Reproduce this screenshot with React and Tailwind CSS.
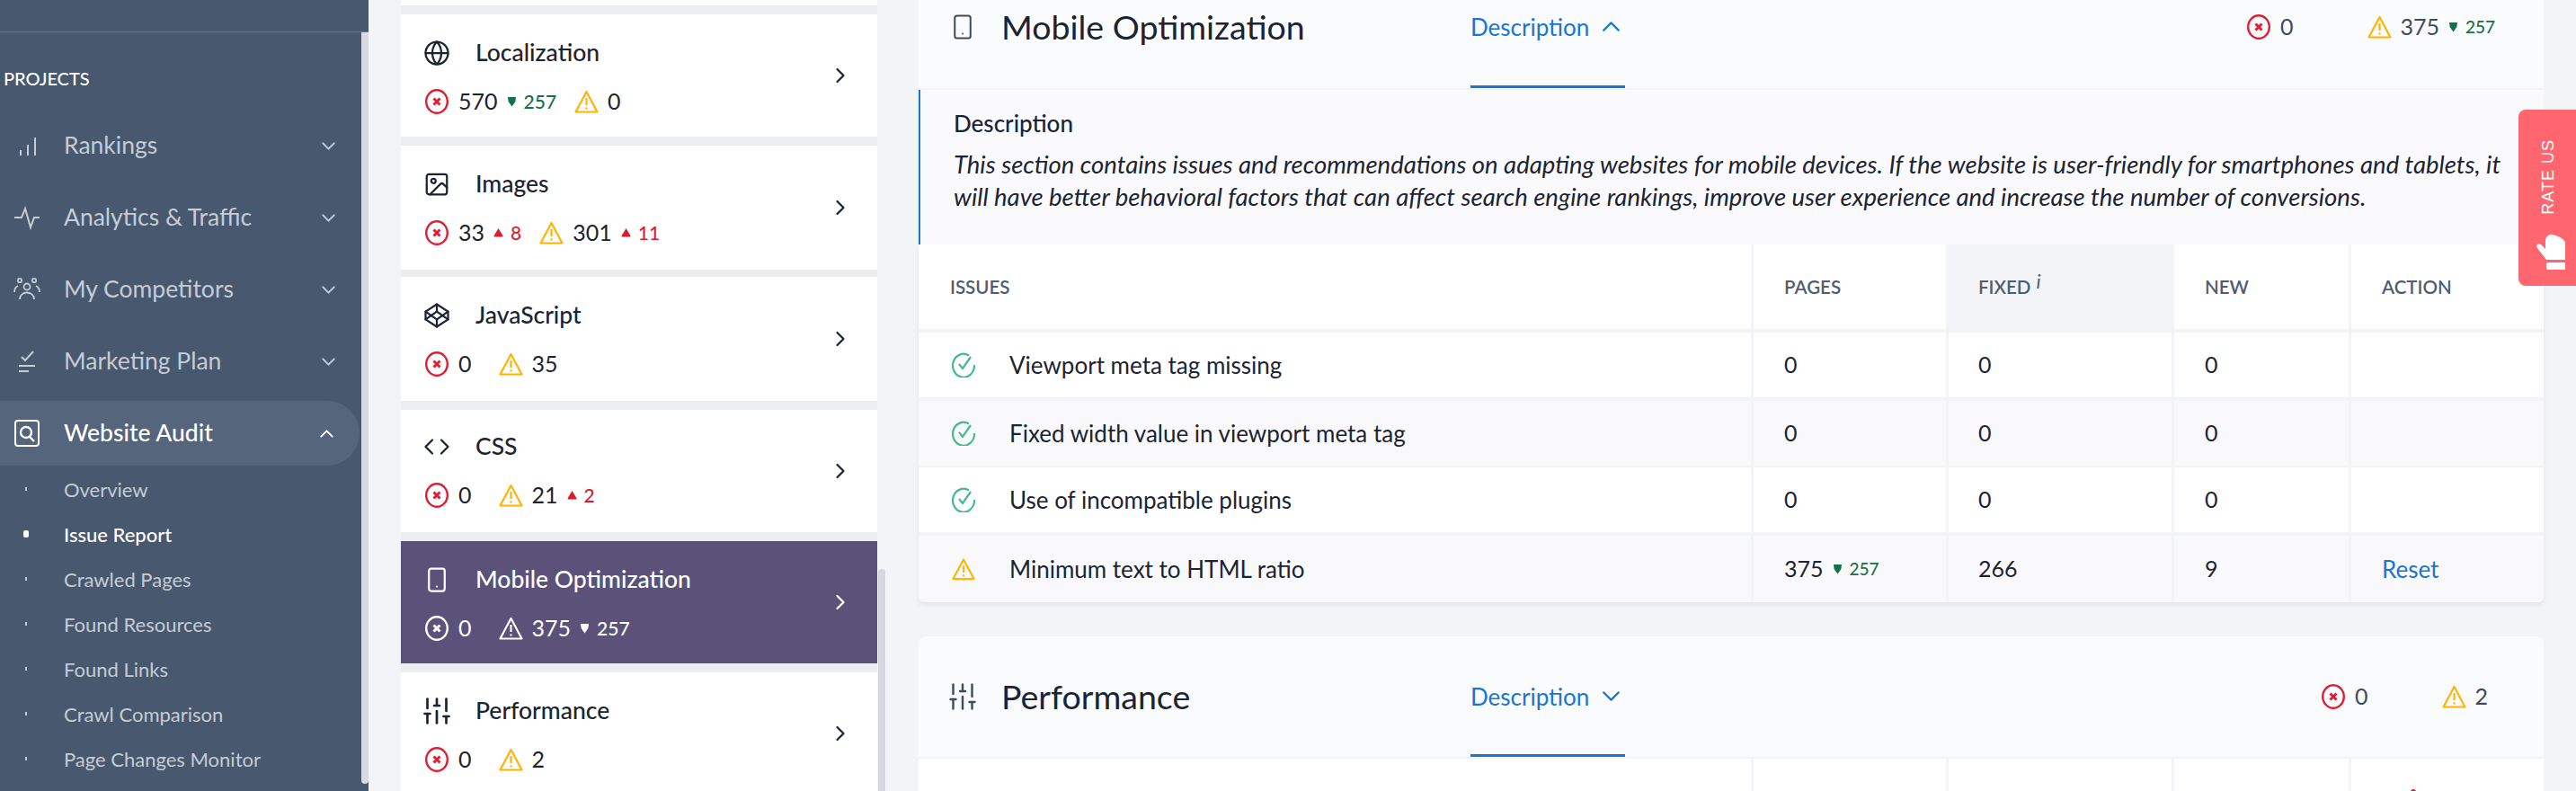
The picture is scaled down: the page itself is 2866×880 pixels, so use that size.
import { ChevronDown, ChevronUp, ChevronRight, Globe, Image, Codepen, Code, Smartphone, SlidersVertical } from "lucide-react";

function BarsIcon() {
  return (
    <svg width="28" height="28" viewBox="0 0 28 28" fill="none" stroke="#c5ccd6" strokeWidth="2">
      <path d="M7 25v-6M15 25V13M23 25V5" />
    </svg>
  );
}

function PulseIcon() {
  return (
    <svg width="30" height="28" viewBox="0 0 30 28" fill="none" stroke="#c5ccd6" strokeWidth="2">
      <path d="M1 14h8l4-10 6 21 4-11h6" />
    </svg>
  );
}

function PeopleIcon() {
  return (
    <svg width="30" height="28" viewBox="0 0 30 28" fill="none" stroke="#c5ccd6" strokeWidth="1.8">
      <circle cx="15" cy="11" r="3.5" />
      <circle cx="7" cy="4" r="2.2" />
      <circle cx="23" cy="4" r="2.2" />
      <path d="M7 25c0-10 16-10 16 0M1 17c0-4 2-6 4-7M29 17c0-4-2-6-4-7" />
    </svg>
  );
}

function PlanIcon() {
  return (
    <svg width="28" height="28" viewBox="0 0 28 28" fill="none" stroke="#c5ccd6" strokeWidth="2">
      <path d="M8 9l4 4 9-10M5 19h18M5 25h11" />
    </svg>
  );
}

function AuditIcon() {
  return (
    <svg width="28" height="30" viewBox="0 0 28 30" fill="none" stroke="#fff" strokeWidth="2">
      <rect x="1" y="1" width="26" height="28" rx="3" />
      <circle cx="13" cy="14" r="6" strokeWidth="2.4" />
      <path d="M17 19l5 5" strokeWidth="2.4" />
    </svg>
  );
}

function ErrorIcon({ mono }) {
  return (
    <svg width="26" height="28" viewBox="0 0 26 28" fill="none" stroke={mono ? "#fff" : "#e01e33"} strokeWidth="2.4">
      <ellipse cx="13" cy="14" rx="11.800" ry="12.800" />
      <path d="M9.500 10.500l7 7M16.500 10.500l-7 7" strokeWidth="3" />
    </svg>
  );
}

function WarnIcon({ mono }) {
  const c = mono ? "#fff" : "#ffb400";
  return (
    <svg width="27" height="26" viewBox="0 0 27 26" fill="none" stroke={c} strokeWidth="2.2" strokeLinejoin="round">
      <path d="M13.5 2L1.5 24.5h24z" />
      <path d="M13.5 9v8M13.5 19.5v2" />
    </svg>
  );
}

function CheckIcon() {
  return (
    <svg width="26" height="28" viewBox="0 0 26 28" fill="none" stroke="#47b98f" strokeWidth="2.2">
      <path d="M19 3.5A12 13 0 1 0 25 14" />
      <path d="M8 13l4 5 9-13" />
    </svg>
  );
}

function Delta({ dir, value, light, small }) {
  const c = light ? "text-white" : dir === "down" ? "text-[#14704a]" : "text-[#dc1c2e]";
  return (
    <span className={`flex items-center gap-[8px] ml-[10px] font-medium ${small ? "text-[19px]" : "text-[21px]"} ${c}`}>
      <svg width="11" height="12" viewBox="0 0 11 12" fill="currentColor">
        {dir === "down" ? <path d="M1 1h9l-.6 5L5.5 11.5 1.6 6z" /> : <path d="M5.500 1l4.800 8c.3.8 0 1.500-1 1.500H1.700c-1 0-1.300-.7-1-1.500z" />}
      </svg>
      {value}
    </span>
  );
}

function NavRow({ icon, label, active, open }) {
  const Chev = open ? ChevronUp : ChevronDown;
  return (
    <div className={`flex h-[72px] items-center rounded-r-full ${active ? "bg-[#54657c] text-white font-medium" : "text-[#c5ccd6]"}`}>
      <span className="flex w-[71px] justify-center pr-[11px]">{icon}</span>
      <span className="flex-1 text-[26.5px]">{label}</span>
      <Chev size={25} strokeWidth={1.9} className={`mr-[24px] ${active ? "text-white" : "text-[#c5ccd6]"}`} />
    </div>
  );
}

function SubItem({ label, active }) {
  return (
    <div className={`flex h-[50px] items-center text-[22px] ${active ? "text-white font-medium" : "text-[#c5ccd6]"}`}>
      <span className="flex w-[71px] justify-center pr-[13px]">
        <span className={active ? "h-[8px] w-[6px] rounded-[2px] bg-white" : "h-[4px] w-[1.500px] bg-[#c5ccd6]"} />
      </span>
      {label}
    </div>
  );
}

function Sidebar() {
  return (
    <div className="flex h-[880px] w-[410px] shrink-0 flex-col bg-[#47586f]">
      <div className="h-[36px] shrink-0 border-b border-[#6b7a8e]" />
      <div className="flex flex-1">
        <div className="flex-1">
          <div className="flex h-[90px] items-end pb-[24px] pl-[4px] text-[20px] font-medium text-white">PROJECTS</div>
          <div className="flex flex-col gap-[8px]">
            <NavRow icon={<BarsIcon />} label="Rankings" />
            <NavRow icon={<PulseIcon />} label="Analytics & Traffic" />
            <NavRow icon={<PeopleIcon />} label="My Competitors" />
            <NavRow icon={<PlanIcon />} label="Marketing Plan" />
            <div className="mr-[2px]">
              <NavRow icon={<AuditIcon />} label="Website Audit" active open />
            </div>
          </div>
          <div className="pt-px">
            <SubItem label="Overview" />
            <SubItem label="Issue Report" active />
            <SubItem label="Crawled Pages" />
            <SubItem label="Found Resources" />
            <SubItem label="Found Links" />
            <SubItem label="Crawl Comparison" />
            <SubItem label="Page Changes Monitor" />
          </div>
        </div>
        <div className="mb-[8px] w-[8px] rounded-b-md bg-[#d8dbe6]" />
      </div>
    </div>
  );
}

function Stats({ err, errDelta, warn, warnDelta, light }) {
  return (
    <div className={`flex h-[28px] items-center text-[25px] ${light ? "text-white" : "text-[#1c2433]"}`}>
      <ErrorIcon mono={light} />
      <span className="ml-[11px]">{err}</span>
      {errDelta && <Delta {...errDelta} light={light} />}
      <span className={errDelta ? "ml-[20px]" : "ml-[30px]"}>
        <WarnIcon mono={light} />
      </span>
      <span className="ml-[10px]">{warn}</span>
      {warnDelta && <Delta {...warnDelta} light={light} />}
    </div>
  );
}

const cards = [
  { title: "Localization", Icon: Globe, size: 30, h: "h-[136px] mb-[10px]", pt: "pt-[29px]", err: 570, errDelta: { dir: "down", value: 257 }, warn: 0 },
  { title: "Images", Icon: Image, size: 30, h: "h-[138px] mb-[8px]", pt: "pt-[29px]", err: 33, errDelta: { dir: "up", value: 8 }, warn: 301, warnDelta: { dir: "up", value: 11 } },
  { title: "JavaScript", Icon: Codepen, size: 30, h: "h-[138px] mb-[10px]", pt: "pt-[29px]", err: 0, warn: 35 },
  { title: "CSS", Icon: Code, size: 30, h: "h-[136px] mb-[10px]", pt: "pt-[27px]", err: 0, warn: 21, warnDelta: { dir: "up", value: 2 } },
  { title: "Mobile Optimization", Icon: Smartphone, size: 30, h: "h-[136px] mb-[10px]", pt: "pt-[29px]", err: 0, warn: 375, warnDelta: { dir: "down", value: 257 }, active: true },
  { title: "Performance", Icon: SlidersVertical, size: 36, h: "h-[136px]", pt: "pt-[29px]", err: 0, warn: 2 },
];

function Card({ c }) {
  const { Icon } = c;
  return (
    <div className={`flex items-center justify-between pl-[27px] pr-[27px] ${c.h} ${c.active ? "bg-[#5a5278] text-white" : "bg-white text-[#1c2433]"}`}>
      <div className={`h-full ${c.pt}`}>
        <div className="flex h-[28px] items-center">
          <span className="flex w-[26px] justify-center">
            <Icon size={c.size} strokeWidth={1.8} className="shrink-0" />
          </span>
          <span className="ml-[30px] text-[26.5px] font-medium">{c.title}</span>
        </div>
        <div className="mt-[26px]">
          <Stats {...c} light={c.active} />
        </div>
      </div>
      <ChevronRight size={28} strokeWidth={1.9} />
    </div>
  );
}

function Middle() {
  return (
    <div className="flex h-[880px] w-[575px] shrink-0 pl-[36px]">
      <div className="w-[530px] bg-[#edeef2]">
        <div className="mb-[10px] h-[6px] bg-white" />
        {cards.map((c) => <Card key={c.title} c={c} />)}
      </div>
      <div className="ml-px mt-[633px] h-[247px] w-[8px] rounded-t-md bg-[#d5d8e3]" />
    </div>
  );
}

function SectionHeader({ Icon, size, title, open, err, warn, warnDelta, cls, pr }) {
  const Chev = open ? ChevronUp : ChevronDown;
  return (
    <div className={`flex bg-[#fafbfd] ${cls}`}>
      <div className="flex h-[28px] w-[614px] items-center pl-[35px]">
        <span className="flex w-[28px] justify-center text-[#3d4a5f]">
          <Icon size={size} strokeWidth={1.6} className="shrink-0" />
        </span>
        <span className="ml-[29px] text-[37.5px] text-[#1c2433]">{title}</span>
      </div>
      <div className="flex w-[172px] items-start border-b-[3px] border-[#1976d2] text-[26px] leading-[28px] text-[#1976d2]">
        Description
        <Chev size={33} strokeWidth={1.6} className="-mt-[3px] ml-[8px] shrink-0" />
      </div>
      <div className={`flex h-[28px] flex-1 items-center justify-end text-[25px] text-[#3d4a5f] ${pr}`}>
        <ErrorIcon />
        <span className="ml-[11px]">{err}</span>
        <span className="ml-[83px]"><WarnIcon /></span>
        <span className="ml-[9px]">{warn}</span>
        {warnDelta && <Delta {...warnDelta} small />}
      </div>
    </div>
  );
}

const cols = "grid grid-cols-[926px_217px_251px_197px_217px]";
const sep = "border-l-[3px] border-[#f3f4f8]";

const rows = [
  { icon: <CheckIcon />, name: "Viewport meta tag missing", pages: "0", fixed: "0", fresh: "0", cls: "h-[72px] mb-[4px] bg-white" },
  { icon: <CheckIcon />, name: "Fixed width value in viewport meta tag", pages: "0", fixed: "0", fresh: "0", cls: "h-[72px] mb-[2px] bg-[#f9f9fc]" },
  { icon: <CheckIcon />, name: "Use of incompatible plugins", pages: "0", fixed: "0", fresh: "0", cls: "h-[72px] mb-[4px] bg-white" },
  { icon: <WarnIcon />, name: "Minimum text to HTML ratio", pages: "375", delta: true, fixed: "266", fresh: "9", action: "Reset", cls: "h-[74px] bg-[#f9f9fc]" },
];

function Table() {
  return (
    <div className="overflow-hidden rounded-b-md bg-[#f3f4f8] shadow-[0_3px_5px_rgba(30,40,60,0.07)]">
      <div className={`${cols} mb-[4px] h-[94px] bg-white text-[20.5px] font-semibold uppercase text-[#4f5d73]`}>
        <div className="flex items-center pl-[35px]">Issues</div>
        <div className={`flex items-center pl-[34px] ${sep}`}>Pages</div>
        <div className="flex items-center bg-[#f3f4f8] pl-[36px]">
          Fixed<span className="mb-[14px] ml-[6px] text-[22px] font-normal normal-case italic">i</span>
        </div>
        <div className={`flex items-center pl-[34px] ${sep}`}>New</div>
        <div className={`flex items-center pl-[34px] ${sep}`}>Action</div>
      </div>
      {rows.map((r) => (
        <div key={r.name} className={`${cols} text-[25px] text-[#1c2433] ${r.cls}`}>
          <div className="flex items-center pl-[37px]">
            <span className="flex w-[26px] justify-center">{r.icon}</span>
            <span className="ml-[38px] text-[26px]">{r.name}</span>
          </div>
          <div className={`flex items-center pl-[34px] ${sep}`}>
            {r.pages}
            {r.delta && <Delta dir="down" value={257} small />}
          </div>
          <div className={`flex items-center pl-[33px] ${sep}`}>{r.fixed}</div>
          <div className={`flex items-center pl-[34px] ${sep}`}>{r.fresh}</div>
          <div className={`flex items-center pl-[34px] text-[26px] text-[#1976d2] ${sep}`}>{r.action}</div>
        </div>
      ))}
    </div>
  );
}

function Main() {
  return (
    <div className="ml-[37px] w-[1808px] shrink-0">
      <SectionHeader Icon={Smartphone} size={30} title="Mobile Optimization" open err={0} warn={375} warnDelta={{ dir: "down", value: 257 }} cls="h-[98px] pt-[16px]" pr="pr-[54px]" />
      <div className="h-[2px] bg-[#f3f4f8]" />
      <div className="h-[172px] border-l-2 border-[#1976d2] bg-[#fafafd] pl-[37px] pt-[24px] text-[#1c2433]">
        <div className="text-[26px] font-medium leading-[26px]">Description</div>
        <p className="mt-[15px] text-[27.5px] italic leading-[36px]">
          This section contains issues and recommendations on adapting websites for mobile devices. If the website is user-friendly for smartphones and tablets, it
          <br />
          will have better behavioral factors that can affect search engine rankings, improve user experience and increase the number of conversions.
        </p>
      </div>
      <Table />
      <div className="mt-[38px] rounded-t-lg">
        <SectionHeader Icon={SlidersVertical} size={36} title="Performance" err={0} warn={2} cls="h-[134px] rounded-t-lg pt-[53px]" pr="pr-[62px]" />
        <div className="h-[2px] bg-[#f3f4f8]" />
        <div className={`${cols} h-[40px] bg-white`}>
          <div />
          <div className={sep} />
          <div className={sep} />
          <div className={sep} />
          <div className={`${sep} pl-[66px] pt-[34px]`}>
            <span className="block h-[6px] w-[6px] rounded-full bg-[#dc1c2e]" />
          </div>
        </div>
      </div>
    </div>
  );
}

function RateUs() {
  return (
    <div className="absolute right-0 top-[122px] flex h-[196px] w-[64px] flex-col items-center rounded-l-lg bg-[#ff6670] pl-[2px] pt-[33px] font-['Liberation_Sans',sans-serif] text-white">
      <span className="rotate-180 text-[18px] tracking-[1px] [writing-mode:vertical-rl]">RATE US</span>
      <svg width="36" height="40" viewBox="0 0 36 40" fill="#fff" className="ml-[2px] mt-[21px] shrink-0">
        <path d="M15 29L5 16c-2-4 1-6 4-4l5 5V7c1-5 5-7 8-6 8 2 13 5 14 9v19z" />
        <rect x="15" y="32" width="21" height="8" rx="1" />
      </svg>
    </div>
  );
}

export default function App() {
  return (
    <div className="relative flex h-[880px] w-[2866px] overflow-hidden bg-[#f3f4f8] font-['Lato',sans-serif]">
      <Sidebar />
      <Middle />
      <Main />
      <RateUs />
    </div>
  );
}
